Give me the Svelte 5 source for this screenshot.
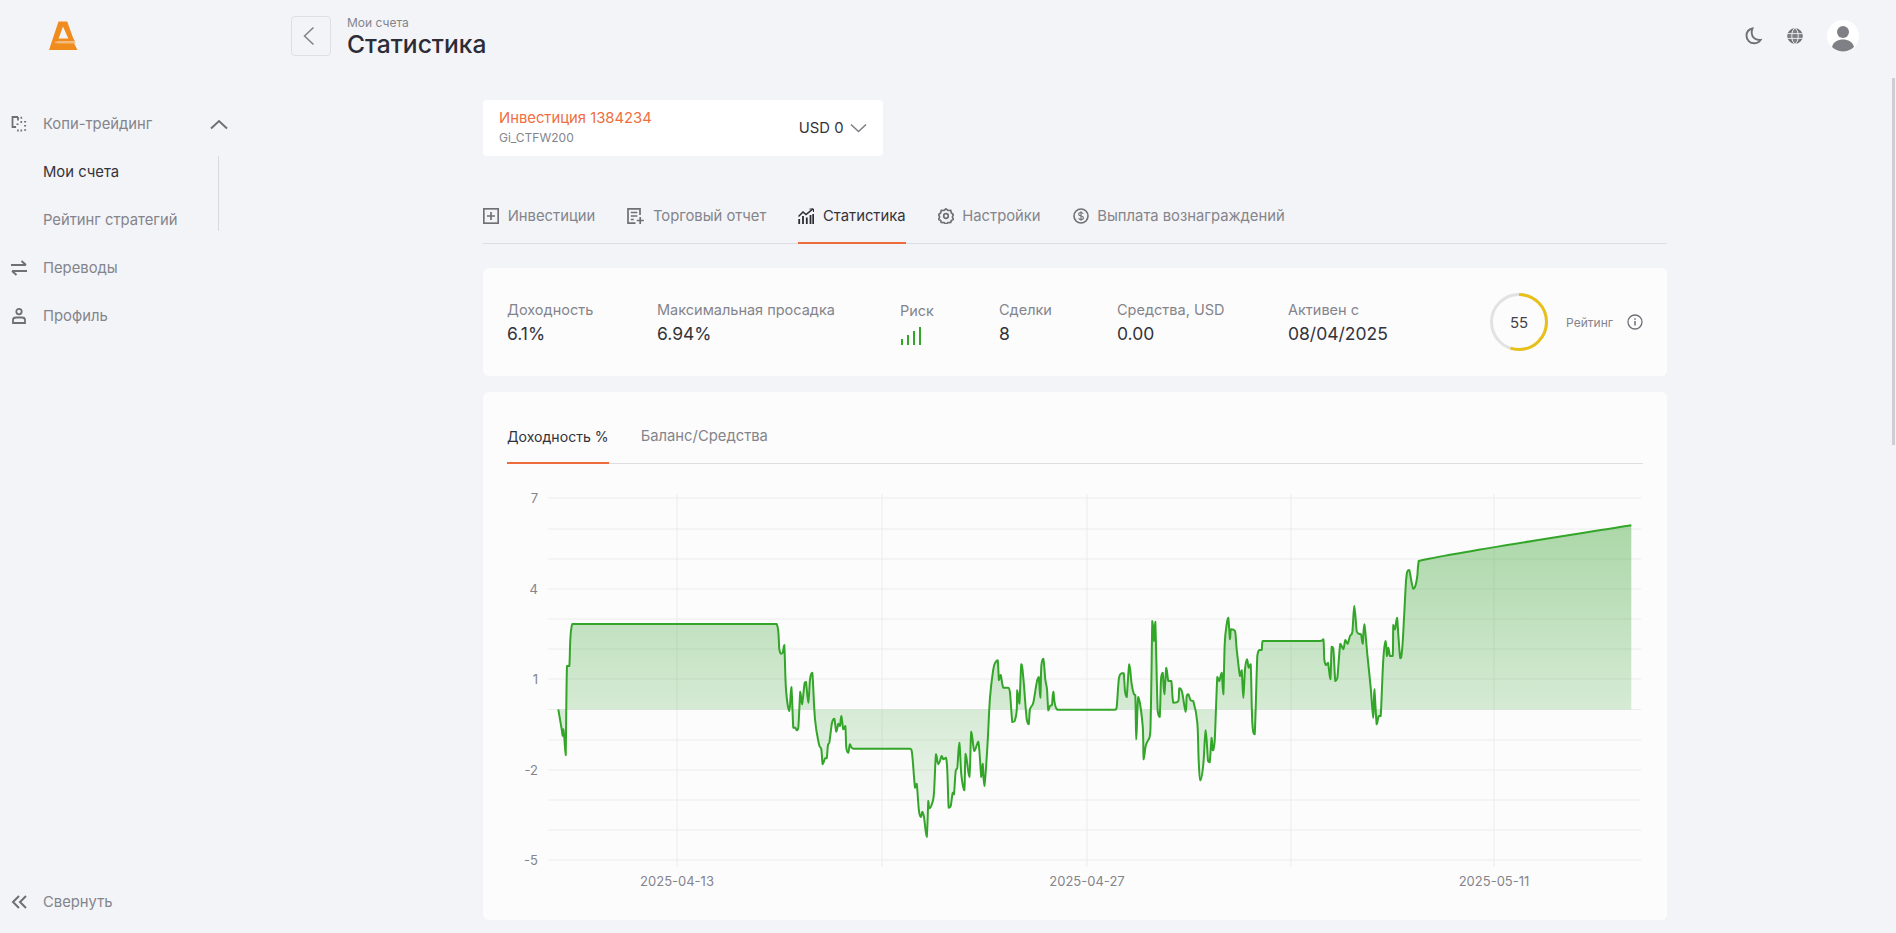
<script>
  const a = [175,865,185,925,188,945,190,925,193,950,197,1003,201,735,208,735,217,609,830,609,838,685,843,698,848,695,853,672,858,805,868,870,874,798,880,920,886,920,890,928,895,920,901,812,906,850,914,785,918,783,925,845,930,775,937,755,945,895,957,970,964,985,968,1030,975,1012,980,1012,984,972,988,965,996,905,1003,893,1009,932,1015,908,1020,915,1024,885,1030,925,1036,915,1039,980,1045,995,1050,970,1060,983,1230,983,1236,995,1245,1100,1250,1088,1257,1170,1263,1188,1267,1172,1272,1188,1280,1248,1285,1140,1288,1162,1297,1145,1302,1115,1308,1000,1315,1030,1325,1005,1330,1015,1338,1010,1342,1050,1346,1160,1352,1155,1358,1115,1362,1120,1367,1050,1372,1040,1378,965,1384,1060,1393,1108,1397,998,1408,1068,1414,932,1423,990,1435,962,1444,1068,1448,1028];
  const b = [13,1095,22,980,30,830,40,745,46,725,53,718,57,778,62,762,70,800,85,800,90,815,97,903,104,900,110,870,112,808,118,848,124,730,130,770,140,895,146,910,150,865,160,845,170,785,176,768,181,830,184,735,190,713,196,775,201,805,205,868,210,855,216,852,220,812,232,866,405,866,410,858,417,770,425,757,431,757,435,810,440,828,448,730,455,790,462,820,466,822,469,955,475,828,488,915,491,1015,497,975,503,960,511,935,517,600,520,630,522,660,526,602,533,870,539,888,543,775,548,755,553,820,559,740,565,780,574,780,580,845,595,840,598,802,606,812,617,872,620,825,625,820,632,838,640,840,652,905,656,1020,661,1078,670,1030,677,928,684,1020,689,1024,695,950,698,988,704,960,712,768,718,780,725,755,730,820,734,670,740,610,745,590,750,655,753,625,765,630,770,685,780,765,785,748,790,830,795,745,801,715,806,740,812,730,817,905,824,940,832,705,838,687,845,687,848,660,1020,660,1030,655,1033,715,1038,732,1044,725,1051,775,1055,677,1060,682,1066,780,1072,772,1081,668,1090,685,1096,657,1103,668,1110,645,1117,633,1123,555,1130,630,1136,638,1143,640,1148,668,1153,610,1162,700,1172,800,1180,890,1183,805,1190,910,1196,885,1202,885,1210,715,1217,660,1221,705,1225,680,1230,705,1238,705,1240,612,1245,625,1251,590,1255,640,1261,712,1267,680,1278,480,1282,452,1288,447,1295,485,1300,503,1306,495,1312,465,1316,420];
  const ox = 507, oy = 470;
  const pts = [];
  for (let i = 0; i < a.length; i += 2) pts.push([500 + a[i] / 3 - ox, 420 + a[i + 1] / 3 - oy]);
  for (let i = 0; i < b.length; i += 2) pts.push([980 + b[i] / 3 - ox, 420 + b[i + 1] / 3 - oy]);
  pts.push([1631.3 - ox, 524.3 - oy]);

  const clamp = (v, p, q) => Math.min(Math.max(v, Math.min(p, q)), Math.max(p, q));
  const k = 0.18;
  let curve = '';
  for (let i = 0; i < pts.length - 1; i++) {
    const p0 = pts[Math.max(i - 1, 0)], p1 = pts[i], p2 = pts[i + 1], p3 = pts[Math.min(i + 2, pts.length - 1)];
    const c1x = clamp(p1[0] + (p2[0] - p0[0]) * k, p1[0], p2[0]);
    const c1y = clamp(p1[1] + (p2[1] - p0[1]) * k, p1[1], p2[1]);
    const c2x = clamp(p2[0] - (p3[0] - p1[0]) * k, p1[0], p2[0]);
    const c2y = clamp(p2[1] - (p3[1] - p1[1]) * k, p1[1], p2[1]);
    curve += ` C${c1x.toFixed(1)} ${c1y.toFixed(1)} ${c2x.toFixed(1)} ${c2y.toFixed(1)} ${p2[0].toFixed(1)} ${p2[1].toFixed(1)}`;
  }
  const start = `${pts[0][0].toFixed(1)} ${pts[0][1].toFixed(1)}`;
  const line = `M${start}${curve}`;
  const zero = 708.5 - oy;
  const area = `M${pts[0][0].toFixed(1)} ${zero} L${start}${curve} L${(1631.3 - ox).toFixed(1)} ${zero} Z`;
  const gridY = [497, 528, 558, 588, 618, 648, 678, 708.5, 739, 769, 799, 829, 859];
  const gridX = [677, 882, 1087, 1291, 1494];
  const yLabels = [[7, 497], [4, 588], [1, 678], [-2, 769], [-5, 859]];
  const xLabels = [['2025-04-13', 677], ['2025-04-27', 1087], ['2025-05-11', 1494]];
  const stats = [
    ['Доходность', '6.1%'], ['Максимальная просадка', '6.94%'], ['Риск', null],
    ['Сделки', '8'], ['Средства, USD', '0.00'], ['Активен с', '08/04/2025']
  ];
  const bars = [6, 10, 14, 18];
</script>

<div class="page">
  <aside class="side">
    <div class="logo">
      <svg width="30" height="32" viewBox="0 0 30 32">
        <path fill="#f08c1e" d="M10.500 1.500h8.700L25.500 19h-5L15 6.500 6.500 30H1z"/>
        <path fill="#f08c1e" d="M8.500 18.500h17l1.500 3H7.300z"/>
        <path fill="#f6b878" d="M7.300 21.500H27l.8 1.800H6.600z"/>
        <path fill="#f08c1e" d="M6 23.300h20l3.500 6.700H3.500z"/>
      </svg>
    </div>
    <nav class="nav">
      <div class="item">
        <svg class="ico wide" width="17" height="16" viewBox="0 0 16 16" fill="none" stroke="#6f6f76" stroke-width="1.800">
          <path d="M6.500 1H1v10h3.600"/><path d="M6.500 1v3.500"/>
          <path d="M9 1.800h1.600M13.600 5v1.600M13.600 9v1.600M13.600 13.200v1.600M5.600 14.600h1.600M9 14.600h1.600M9 6h1.600M6 7.600v1.400" stroke-width="2"/>
        </svg>
        <span>Копи-трейдинг</span>
        <svg class="caret" width="18" height="11" viewBox="0 0 18 11" fill="none" stroke="#6f6f76" stroke-width="2"><path d="M1 9.500 9 2l8 7.500"/></svg>
      </div>
      <div class="subs">
        <div class="item sub active"><span>Мои счета</span></div>
        <div class="item sub"><span>Рейтинг стратегий</span></div>
      </div>
      <div class="item">
        <svg class="ico" width="16" height="16" viewBox="0 0 16 16" fill="none" stroke="#6f6f76" stroke-width="1.900"><path d="M0 5h15M10.500 1 15 5M16 11H1M5.500 15 1 11"/></svg>
        <span>Переводы</span>
      </div>
      <div class="item">
        <svg class="ico" width="16" height="16" viewBox="0 0 16 16" fill="none" stroke="#6f6f76" stroke-width="1.800"><circle cx="8" cy="3.600" r="2.700"/><path d="M2 15v-3c0-1.600 1.200-2.500 3-2.500h6c1.800 0 3 .9 3 2.500v3z"/></svg>
        <span>Профиль</span>
      </div>
    </nav>
    <div class="collapse">
      <svg class="ico" width="16" height="14" viewBox="0 0 16 14" fill="none" stroke="#6f6f76" stroke-width="2"><path d="M8 1 2 7l6 6M15 1 9 7l6 6"/></svg>
      <span>Свернуть</span>
    </div>
  </aside>

  <main class="main">
    <header class="top">
      <button class="back" aria-label="Назад">
        <svg width="12" height="20" viewBox="0 0 12 20" fill="none" stroke="#7f7f86" stroke-width="1.500"><path d="M10.500 1.500 1.500 10l9 8.500"/></svg>
      </button>
      <div class="crumbs">
        <div class="crumb">Мои счета</div>
        <h1>Статистика</h1>
      </div>
      <div class="tools">
        <svg width="18" height="18" viewBox="0 0 18 18" fill="none" stroke="#6f6f76" stroke-width="1.900"><path d="M7.500 1.500c-3.600.8-6 3.600-6 7.200 0 4.200 3.400 7.600 7.600 7.600 2.600 0 5-1.200 6.400-3.300-4 .4-8.600-2.400-8.800-6.800-.1-1.700.2-3.300.8-4.700z"/></svg>
        <svg width="16" height="16" viewBox="0 0 16 16" fill="#7f7f86" stroke="#6f6f76" stroke-width="1.500"><circle cx="8" cy="8" r="7"/><g stroke="#f3f4f8" stroke-width=".9" fill="none"><ellipse cx="8" cy="8" rx="3.200" ry="7.500"/><path d="M.5 5.600h15M.5 10.400h15"/></g></svg>
        <div class="avatar">
          <svg width="32" height="32" viewBox="0 0 32 32" fill="#7f7f86"><circle cx="16" cy="12" r="6"/><path d="M5 27c1.500-5.500 6-7.500 11-7.500s9.500 2 11 7.500c-3 2.800-7 4.500-11 4.500S8 29.800 5 27z"/></svg>
        </div>
      </div>
    </header>

    <section class="content">
      <div class="selector">
        <div>
          <div class="inv">Инвестиция 1384234</div>
          <div class="code">Gi_CTFW200</div>
        </div>
        <div class="usd">
          <span>USD 0</span>
          <svg width="17" height="10" viewBox="0 0 17 10" fill="none" stroke="#7f7f86" stroke-width="1.600"><path d="M1 1.500 8.500 8.500 16 1.500"/></svg>
        </div>
      </div>

      <div class="tabs">
        <div class="tab">
          <svg width="16" height="16" viewBox="0 0 16 16" fill="none" stroke="#6f6f76" stroke-width="1.700"><rect x=".8" y=".8" width="14.400" height="14.400"/><path d="M8 4v8M4 8h8"/></svg>
          <span>Инвестиции</span>
        </div>
        <div class="tab">
          <svg width="17" height="16" viewBox="0 0 17 16" fill="none" stroke="#6f6f76" stroke-width="1.700"><path d="M13 7V.8H1v14.400h7.500"/><path d="M3.800 4.500h6.500M3.800 8h6.500M3.800 11.500h3M13.200 9v7M9.800 12.500h7"/></svg>
          <span>Торговый отчет</span>
        </div>
        <div class="tab on">
          <svg width="16" height="16" viewBox="0 0 16 16" fill="none" stroke="#2c2c36" stroke-width="1.500"><path d="M.5 8.500 5 4l3 2.500L15 .8"/><path d="M11.500 1H15.500V4" stroke-width="1"/><path d="M1.200 11v5M5 8v8M8.800 9.500V16M12.500 7v9M15.200 6v10" stroke-width="1.800"/></svg>
          <span>Статистика</span>
        </div>
        <div class="tab">
          <svg width="16" height="16" viewBox="0 0 16 16" fill="none" stroke="#6f6f76" stroke-width="1.700"><path d="M8 .8 10 2.500l2.700-.2.7 2.600 2 1.700-1 2.400 1 2.400-2 1-.7 2-2.700.2-2 1.600-2-1.600-2.700-.2-.7-2-2-1 1-2.400-1-2.400 2-1.700.7-2.600 2.700.2z"/><circle cx="8" cy="8" r="2.300"/></svg>
          <span>Настройки</span>
        </div>
        <div class="tab">
          <svg width="16" height="16" viewBox="0 0 16 16" fill="none" stroke="#6f6f76" stroke-width="1.600"><circle cx="8" cy="8" r="7"/><path d="M10.300 5.800C9.800 4.800 9 4.500 8 4.500c-1.400 0-2.300.7-2.300 1.800 0 2.500 4.700 1 4.700 3.500 0 1.100-1 1.800-2.400 1.800-1.100 0-2-.5-2.400-1.400M8 3.200v9.600" stroke-width="1.100"/></svg>
          <span>Выплата вознаграждений</span>
        </div>
      </div>

      <div class="card stats">
        {#each stats as [label, value]}
          <div class="stat">
            <div class="label">{label}</div>
            {#if value}
              <div class="value">{value}</div>
            {:else}
              <div class="bars">
                {#each bars as h}<i style="height:{h}px"></i>{/each}
              </div>
            {/if}
          </div>
        {/each}
        <div class="rating">
          <div class="ring">
            <svg width="58" height="58" viewBox="0 0 58 58" fill="none" stroke-width="3">
              <circle cx="29" cy="29" r="27.500" stroke="#e2e2e2"/>
              <circle cx="29" cy="29" r="27.500" stroke="#e8c018" pathLength="100" stroke-dasharray="55 100" transform="rotate(-90 29 29)"/>
            </svg>
            <span>55</span>
          </div>
          <span class="rlabel">Рейтинг</span>
          <svg width="16" height="16" viewBox="0 0 16 16" fill="none" stroke="#6f6f76" stroke-width="1.300"><circle cx="8" cy="8" r="7"/><path d="M8 7v4.500" stroke-width="1.500"/><path d="M8 4.200v1.500" stroke-width="1.500"/></svg>
        </div>
      </div>

      <div class="card chart">
        <div class="ctabs">
          <div class="ctab on">Доходность %</div>
          <div class="ctab alt">Баланс/Средства</div>
        </div>
        <svg class="plot" width="1136" height="430" viewBox="0 0 1136 430">
          <defs>
            <linearGradient id="fill" gradientUnits="userSpaceOnUse" x1="0" y1={524 - oy} x2="0" y2={832 - oy}>
              <stop offset="0" stop-color="#32a028" stop-opacity=".4"/>
              <stop offset="1" stop-color="#32a028" stop-opacity=".05"/>
            </linearGradient>
          </defs>
          {#each gridY as y}
            <line x1={548 - ox} x2={1641 - ox} y1={y - oy} y2={y - oy} stroke="#ececec" stroke-width="1"/>
          {/each}
          {#each gridX as x}
            <line x1={x - ox} x2={x - ox} y1={493 - oy} y2={866 - oy} stroke="#ececec" stroke-width="1"/>
          {/each}
          <path d={area} fill="url(#fill)"/>
          <path d={line} fill="none" stroke="#33a528" stroke-width="2" stroke-linejoin="round"/>
          {#each yLabels as [t, y]}
            <text class="axis" x={538 - ox} y={y - oy + 5} text-anchor="end">{t}</text>
          {/each}
          {#each xLabels as [t, x]}
            <text class="axis" x={x - ox} y={885 - oy} text-anchor="middle">{t}</text>
          {/each}
        </svg>
      </div>
    </section>
  </main>
  <div class="scroll"></div>
</div>

<style>
  :global(body) { margin: 0; background: #f3f4f8; }
  .page {
    display: flex; height: 933px; overflow: hidden; position: relative;
    background: #f3f4f8; color: #2c2c36;
    font-family: Inter, "Noto Sans", sans-serif; font-size: 14px;
  }
  .side { width: 240px; flex: none; display: flex; flex-direction: column; height: 933px; box-sizing: border-box; }
  .logo { height: 100px; padding: 20px 0 0 48px; box-sizing: border-box; }
  .logo svg { display: block; }
  .nav { display: flex; flex-direction: column; }
  .item { height: 48px; display: flex; align-items: center; color: #84848b; padding-left: 11px; font-size: 14.800px; line-height: 18px; }
  .ico { margin-right: 16px; flex: none; }
  .ico.wide { margin-right: 15px; }
  .caret { margin-left: auto; margin-right: 12px; }
  .subs { position: relative; }
  .subs::after { content: ""; position: absolute; right: 21px; top: 8px; bottom: 13px; width: 1px; background: #d9d9de; }
  .sub { padding-left: 43px; }
  .active { color: #33333a; }
  .collapse { margin-top: auto; height: 63px; display: flex; align-items: center; padding-left: 11px; color: #84848b; font-size: 14.800px; }

  .main { flex: 1; min-width: 0; }
  .top { height: 84px; display: flex; align-items: flex-start; padding: 16px 37px 0 51px; box-sizing: border-box; }
  .back { width: 40px; height: 40px; box-sizing: border-box; background: none; border: 1px solid #dfdfe4; border-radius: 4px; display: flex; align-items: center; justify-content: center; padding: 0 4px 0 0; }
  .crumbs { margin-left: 16px; }
  .crumb { font-size: 12px; line-height: 14px; color: #84848b; margin-top: 0; }
  h1 { margin: 0; font-size: 24.600px; line-height: 28px; font-weight: 500; color: #2c2c36; }
  .tools { margin-left: auto; display: flex; align-items: center; gap: 24px; height: 40px; }
  .avatar { width: 32px; height: 32px; border-radius: 50%; background: #fff; overflow: hidden; }
  .avatar svg { display: block; }

  .content { width: 1184px; margin-left: 243px; }
  .selector { width: 400px; height: 56px; margin-top: 16px; box-sizing: border-box; padding: 0 16px 0 16px; background: #fff; border-radius: 4px; display: flex; align-items: center; justify-content: space-between; }
  .inv { font-size: 14.800px; line-height: 20px; color: #ee6f42; margin-top: -2px; }
  .code { font-size: 12px; line-height: 16px; color: #84848b; margin-top: 2px; }
  .usd { display: flex; align-items: center; gap: 6.500px; font-size: 14.800px; color: #33333a; margin-top: -1px; }
  .tabs { display: flex; gap: 32px; margin-top: 34px; height: 54px; box-sizing: border-box; border-bottom: 1px solid #dedee2; }
  .tab { display: flex; align-items: center; gap: 8.700px; height: 54px; box-sizing: border-box; padding-bottom: 2px; color: #84848b; font-size: 14.800px; }
  .tab.on { color: #33333a; border-bottom: 2px solid #ee6b3b; padding-bottom: 0; }

  .card { background: #fcfcfd; border-radius: 6px; }
  .stats { margin-top: 24px; height: 108px; box-sizing: border-box; padding: 0 24px; display: grid; grid-template-columns: 150px 243px 99px 118px 171px 1fr auto; align-items: center; }
  .label { font-size: 14.500px; line-height: 20px; color: #84848b; padding-top: 1px; }
  .value { font-size: 17.500px; line-height: 24px; color: #33333a; margin-top: 2px; }
  .bars { display: flex; align-items: flex-end; gap: 4px; height: 20px; margin-top: 4px; padding-left: 1px; }
  .bars i { width: 2px; background: #33a528; display: block; }
  .rating { display: flex; align-items: center; }
  .ring { width: 58px; height: 58px; position: relative; margin-right: 18px; }
  .ring svg { display: block; }
  .ring span { position: absolute; inset: 0; display: flex; align-items: center; justify-content: center; font-size: 15px; color: #44444a; }
  .rlabel { font-size: 12px; color: #84848b; margin-right: 14px; }

  .chart { margin-top: 16px; height: 528px; box-sizing: border-box; padding: 0 24px; }
  .ctabs { display: flex; gap: 32px; height: 72px; box-sizing: border-box; border-bottom: 1px solid #dedee2; }
  .ctab { display: flex; align-items: center; height: 72px; box-sizing: border-box; color: #84848b; }
  .ctab.alt { padding-top: 15px; font-size: 14.800px; }
  .ctab.on { color: #33333a; border-bottom: 2px solid #ee6b3b; padding-top: 18px; font-size: 14.100px; }
  .plot { display: block; margin-top: 7px; overflow: visible; }
  .axis { font-family: Inter, sans-serif; font-size: 13px; fill: #84848b; }
  .scroll { position: absolute; left: 1892px; top: 78px; width: 3px; height: 367px; background: #cfcfd3; }
</style>
